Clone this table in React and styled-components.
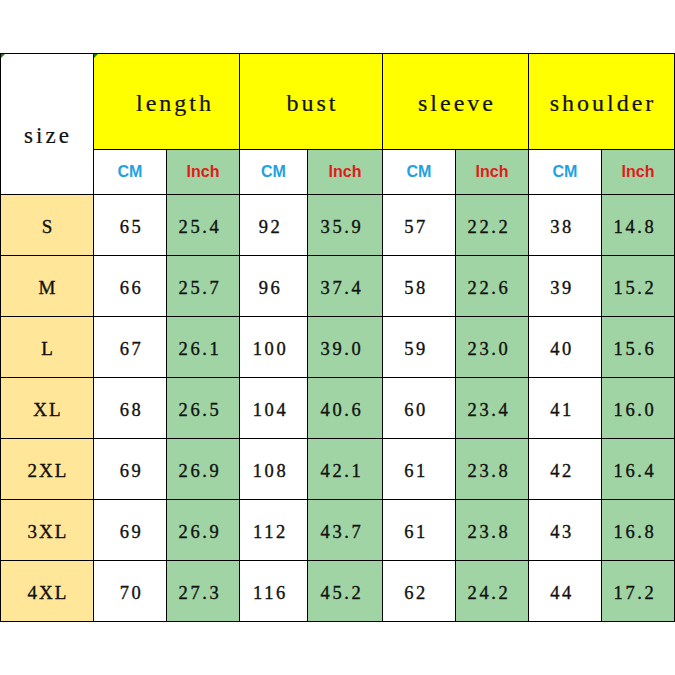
import React from "react";
import styled, { createGlobalStyle } from "styled-components";

const Global = createGlobalStyle`
  html, body { margin: 0; padding: 0; background: #fff; }
  body { width: 675px; height: 675px; overflow: hidden; }
`;

const Page = styled.div`
  padding-top: 53px;
`;

const Grid = styled.div`
  display: grid;
  grid-template-columns: 93px 73px 73px 68px 75px 73px 73px 73px 73px;
  grid-template-rows: 96px 45px repeat(7, 61px);
  width: 675px;
  box-sizing: border-box;
  border-top: 1px solid #000;
  border-left: 1px solid #000;
`;

const Cell = styled.div`
  position: relative;
  box-sizing: border-box;
  border-right: 1px solid #000;
  border-bottom: 1px solid #000;
  display: flex;
  align-items: center;
  justify-content: center;
  white-space: nowrap;
  background: ${(p) => p.$bg || "#fff"};
`;

const Mark = styled.span`
  position: absolute;
  left: 0;
  top: 0;
  width: 0;
  height: 0;
  border-top: 4px solid #1e7b1e;
  border-right: 4px solid transparent;
`;

const serif = `"Liberation Serif", "Times New Roman", serif`;

const SizeHead = styled(Cell)`
  grid-row: 1 / span 2;
  font-family: ${serif};
  font-size: 23px;
  letter-spacing: 3px;
  color: #111;
  padding-top: 24px;
  padding-left: 2px;
  -webkit-text-stroke: 0.2px #111;
`;

const GroupHead = styled(Cell)`
  grid-column: span 2;
  font-family: ${serif};
  font-size: 24px;
  letter-spacing: 3px;
  color: #111;
  padding-top: 4px;
  padding-left: ${(p) => (p.$shift || 0) + 3}px;
  -webkit-text-stroke: 0.2px #111;
`;

const UnitLabel = styled(Cell)`
  font-family: "Liberation Sans", Arial, sans-serif;
  font-weight: 700;
  font-size: 16px;
  color: ${(p) => (p.$inch ? "#e01b1b" : "#1fa2e2")};
`;

const SizeCell = styled(Cell)`
  font-family: ${serif};
  font-size: 19px;
  letter-spacing: 2px;
  color: #111;
  padding-top: 4px;
  padding-left: 2px;
  -webkit-text-stroke: 0.35px #111;
`;

const ValueCell = styled(Cell)`
  font-family: ${serif};
  font-size: 18.5px;
  letter-spacing: 2.6px;
  color: #111;
  padding-top: 4px;
  padding-left: ${(p) => (p.$centered ? 3 : 0)}px;
  padding-right: ${(p) => (p.$centered ? 0 : 6)}px;
  -webkit-text-stroke: 0.35px #111;
`;

const YELLOW = "#ffff00";
const GREEN = "#a0d4a4";
const ORANGE = "#ffe699";

const groups = [
  { name: "length", shift: 14 },
  { name: "bust", shift: 0 },
  { name: "sleeve", shift: 0 },
  { name: "shoulder", shift: 0 },
];

const rows = [
  ["S", "65", "25.4", "92", "35.9", "57", "22.2", "38", "14.8"],
  ["M", "66", "25.7", "96", "37.4", "58", "22.6", "39", "15.2"],
  ["L", "67", "26.1", "100", "39.0", "59", "23.0", "40", "15.6"],
  ["XL", "68", "26.5", "104", "40.6", "60", "23.4", "41", "16.0"],
  ["2XL", "69", "26.9", "108", "42.1", "61", "23.8", "42", "16.4"],
  ["3XL", "69", "26.9", "112", "43.7", "61", "23.8", "43", "16.8"],
  ["4XL", "70", "27.3", "116", "45.2", "62", "24.2", "44", "17.2"],
];

export default function App() {
  return (
    <>
      <Global />
      <Page>
        <Grid>
          <SizeHead>
            <Mark />
            size
          </SizeHead>
          {groups.map((g, i) => (
            <GroupHead key={g.name} $bg={YELLOW} $shift={g.shift}>
              {i === 0 && <Mark />}
              {g.name}
            </GroupHead>
          ))}
          {groups.map((g) => (
            <React.Fragment key={g.name + "u"}>
              <UnitLabel>CM</UnitLabel>
              <UnitLabel $inch $bg={GREEN}>
                Inch
              </UnitLabel>
            </React.Fragment>
          ))}
          {rows.map((r) => (
            <React.Fragment key={r[0]}>
              <SizeCell $bg={ORANGE}>{r[0]}</SizeCell>
              {r.slice(1).map((v, j) => (
                <ValueCell
                  key={j}
                  $bg={j % 2 === 1 ? GREEN : "#fff"}
                  $centered={j === 0}
                >
                  {v}
                </ValueCell>
              ))}
            </React.Fragment>
          ))}
        </Grid>
      </Page>
    </>
  );
}
